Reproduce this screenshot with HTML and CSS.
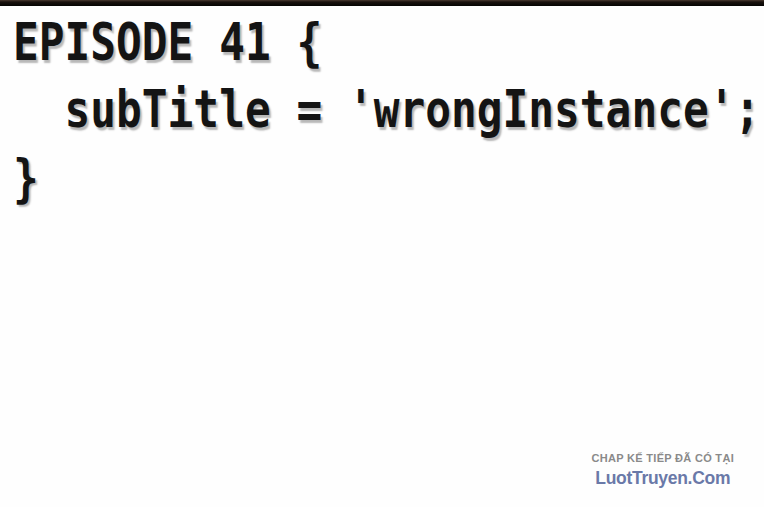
FILE: index.html
```html
<!DOCTYPE html>
<html>
<head>
<meta charset="utf-8">
<link rel="stylesheet" href="styles.css">
</head>
<body>
<div class="page">
  <div class="topbar"></div>
  <div class="code">
    <div class="line">EPISODE 41 {</div>
    <div class="line">  subTitle = 'wrongInstance';</div>
    <div class="line">}</div>
  </div>
  <div class="watermark">
    <div class="wm-top">CHAP KẾ TIẾP ĐÃ CÓ TẠI</div>
    <div class="wm-site">LuotTruyen.Com</div>
  </div>
</div>
</body>
</html>
```
FILE: styles.css
```css
html, body {
  margin: 0;
  padding: 0;
  background: #ffffff;
}
.page {
  width: 764px;
  height: 507px;
  display: flex;
  flex-direction: column;
  overflow: hidden;
  background: #fefefe;
}
.topbar {
  height: 6px;
  background: linear-gradient(to bottom, #4a3a30 0px, #1a120e 2px, #050403 6px);
  flex: none;
}
.code {
  margin-top: 3px;
  padding-left: 13px;
  font-family: "DejaVu Sans Mono", monospace;
  font-weight: bold;
  font-size: 42.8px;
  line-height: 55.3px;
  color: #141414;
  transform: scaleY(1.22);
  transform-origin: top left;
  text-shadow: 2px 2px 1.5px rgba(0, 0, 0, 0.28);
}
.line {
  white-space: pre;
}
.watermark {
  margin-top: auto;
  margin-bottom: 18px;
  align-self: flex-end;
  margin-right: 30px;
  text-align: center;
  font-family: "Liberation Sans", Arial, sans-serif;
}
.wm-top {
  font-size: 11px;
  font-weight: bold;
  color: #8a8a8a;
  letter-spacing: 0.3px;
  line-height: 13px;
}
.wm-site {
  font-size: 17.5px;
  color: #6a79a8;
  line-height: 21px;
  margin-top: 3px;
  font-weight: bold;
  letter-spacing: -0.3px;
}
```
